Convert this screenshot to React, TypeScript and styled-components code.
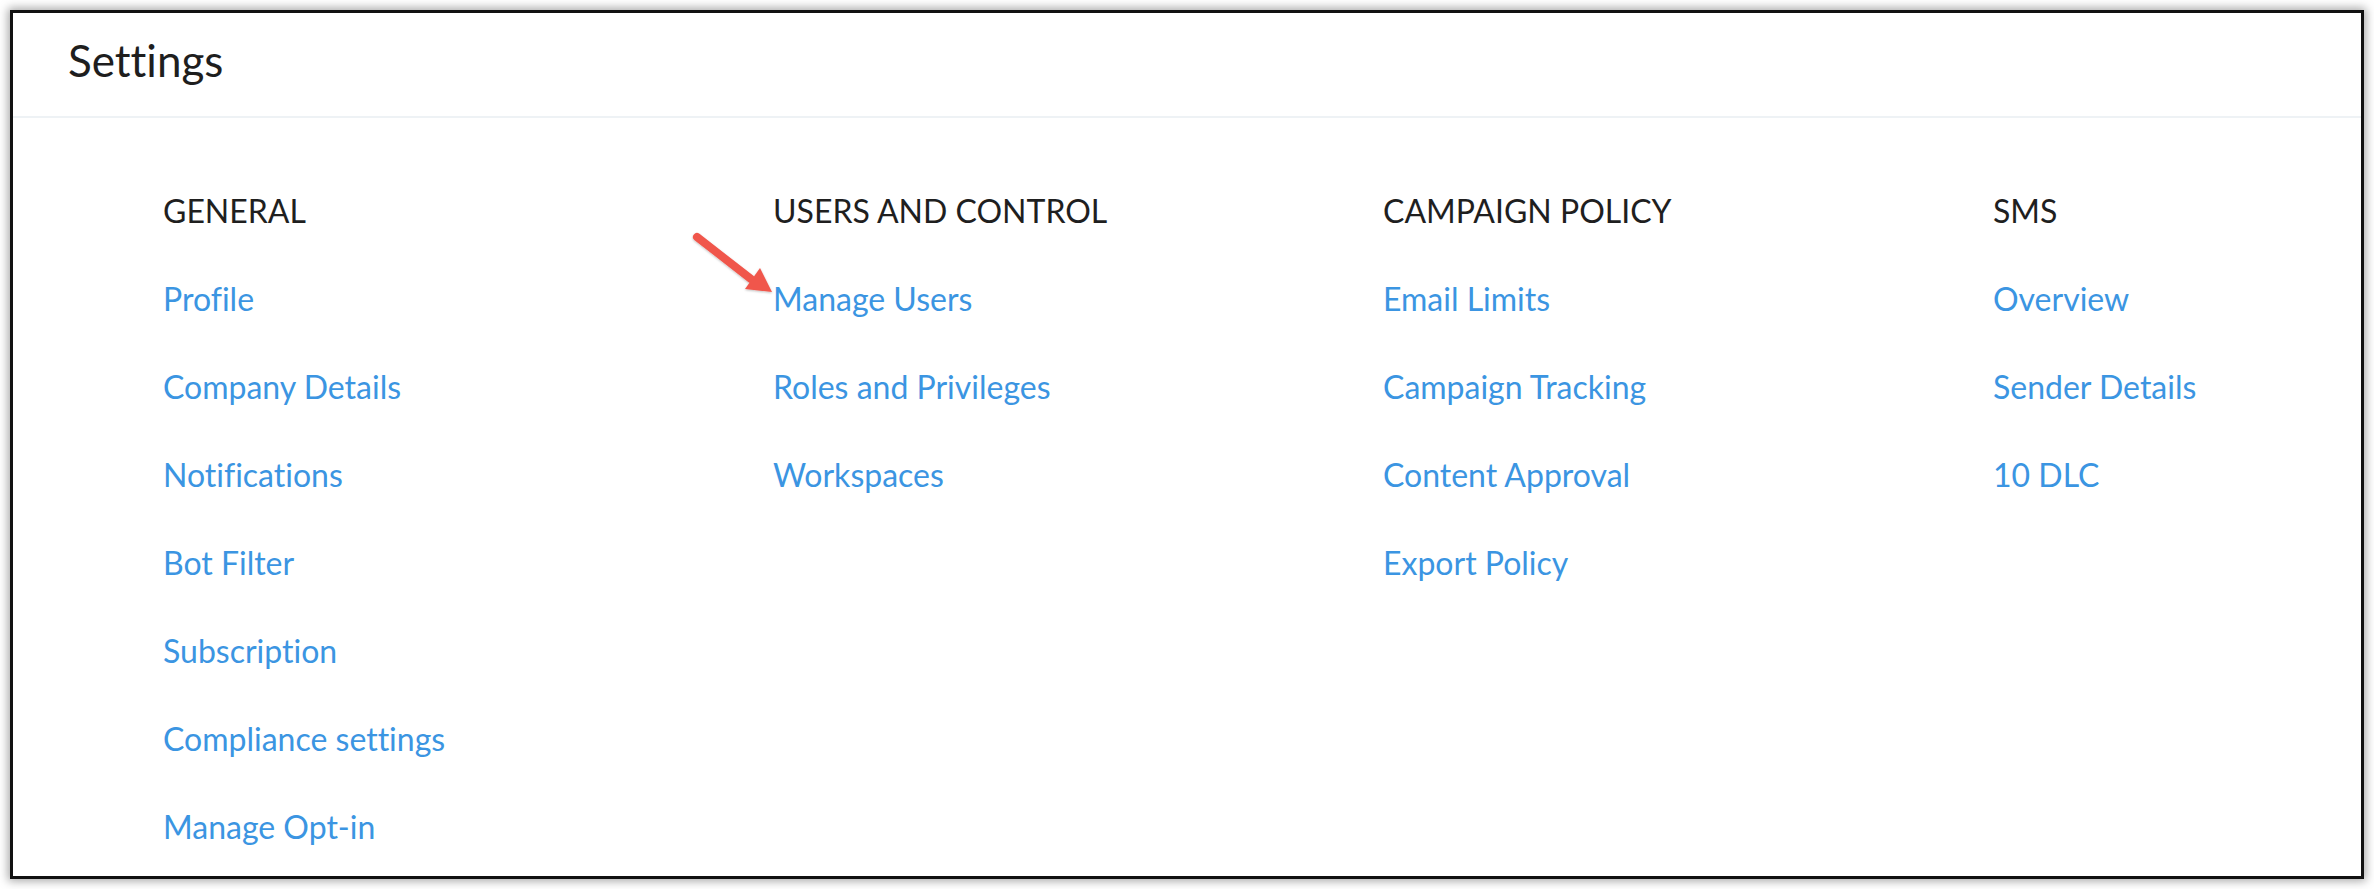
import React from "react";
import styled, { createGlobalStyle } from "styled-components";

const Global = createGlobalStyle`
  html, body { margin: 0; padding: 0; background: #ffffff; }
  body { font-family: Lato, "Noto Sans", sans-serif; }
  * { box-sizing: border-box; }
`;

const Frame = styled.div`
  position: relative;
  margin: 10px;
  width: 2354px;
  height: 869px;
  border: 3px solid #111111;
  background: #ffffff;
  box-shadow: 0 0 9px 2px rgba(0, 0, 0, 0.35);
  overflow: hidden;
`;

const Header = styled.header`
  height: 105px;
  padding: 21px 0 0 55px;
  border-bottom: 2px solid #eef2f5;
`;

const Title = styled.h1`
  margin: 0;
  font-family: Lato, sans-serif;
  font-weight: 400;
  font-size: 44px;
  line-height: 53px;
  color: #1e1e1e;
  font-variant-ligatures: no-common-ligatures;
`;

const Content = styled.main`
  display: grid;
  grid-template-columns: repeat(4, 610px);
  padding: 73px 0 0 150px;
`;

const Column = styled.section`
  display: flex;
  flex-direction: column;
  gap: 48px;
`;

const Heading = styled.h2`
  margin: 0;
  font-family: Lato, sans-serif;
  font-weight: 400;
  font-size: 32px;
  line-height: 40px;
  color: #1f1f1f;
  text-transform: uppercase;
`;

const Link = styled.a`
  font-family: Lato, sans-serif;
  font-size: 32px;
  line-height: 40px;
  color: #3b95e2;
  text-decoration: none;
  width: max-content;
  font-variant-ligatures: no-common-ligatures;
`;

const Arrow = styled.svg`
  position: absolute;
  left: 680px;
  top: 222px;
  width: 110px;
  height: 85px;
  overflow: visible;
`;

const columns: { title: string; links: string[] }[] = [
  {
    title: "General",
    links: [
      "Profile",
      "Company Details",
      "Notifications",
      "Bot Filter",
      "Subscription",
      "Compliance settings",
      "Manage Opt-in",
    ],
  },
  {
    title: "Users and Control",
    links: ["Manage Users", "Roles and Privileges", "Workspaces"],
  },
  {
    title: "Campaign Policy",
    links: ["Email Limits", "Campaign Tracking", "Content Approval", "Export Policy"],
  },
  { title: "SMS", links: ["Overview", "Sender Details", "10 DLC"] },
];

export default function App() {
  return (
    <>
      <Global />
      <Frame>
        <Header>
          <Title>Settings</Title>
        </Header>
        <Content>
          {columns.map((c) => (
            <Column key={c.title}>
              <Heading>{c.title}</Heading>
              {c.links.map((l) => (
                <Link key={l} href="#">
                  {l}
                </Link>
              ))}
            </Column>
          ))}
        </Content>
        <Arrow viewBox="0 0 110 85">
          <defs>
            <filter id="sh" x="-20%" y="-20%" width="140%" height="140%">
              <feDropShadow dx="0" dy="1" stdDeviation="1.2" floodColor="#000" floodOpacity="0.25" />
            </filter>
          </defs>
          <g filter="url(#sh)">
            <line x1="4" y1="2" x2="58" y2="44" stroke="#f0574c" strokeWidth="8" strokeLinecap="round" />
            <polygon points="79,57 67,33 52,54" fill="#f0574c" />
          </g>
        </Arrow>
      </Frame>
    </>
  );
}
